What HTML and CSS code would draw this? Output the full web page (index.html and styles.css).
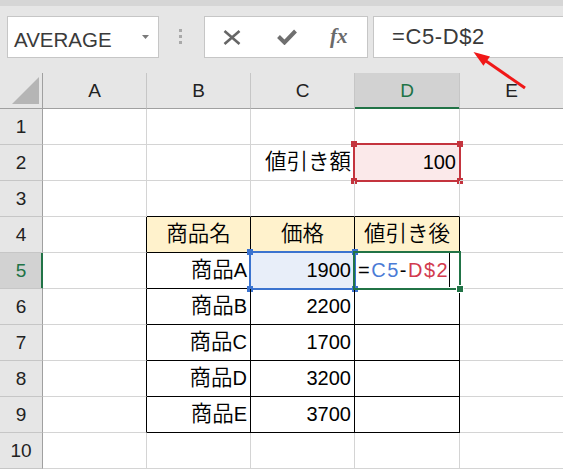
FILE: index.html
```html
<!DOCTYPE html>
<html lang="ja">
<head>
<meta charset="utf-8">
<title>Excel</title>
<link rel="stylesheet" href="styles.css">
</head>
<body>
<div class="app">
  <div class="toolbar">
    <div class="namebox">
      <span class="name">AVERAGE</span>
      <svg class="caret" width="7" height="4" viewBox="0 0 7 4"><path d="M0 0H7L3.5 4Z" fill="#7a7a7a"/></svg>
    </div>
    <div class="grip"><i></i><i></i><i></i></div>
    <div class="fbtns">
      <svg class="ico-x" width="18" height="15" viewBox="0 0 18 15"><path d="M1.5 1L16.5 14M16.5 1L1.5 14" stroke="#666" stroke-width="2.6" fill="none"/></svg>
      <svg class="ico-check" width="20" height="16" viewBox="0 0 20 16"><path d="M1.5 7.5L7.5 13.5L18.5 2" stroke="#6f6f6f" stroke-width="4" fill="none"/></svg>
      <span class="fx">fx</span>
    </div>
    <div class="formula">=C5-D$2</div>
  </div>

  <div class="sheet">
    <div class="corner"><svg width="42" height="35" viewBox="0 0 42 35"><path d="M12 31H39V4Z" fill="#b5b5b5"/></svg></div>
    <div class="ch">A</div>
    <div class="ch">B</div>
    <div class="ch">C</div>
    <div class="ch sel">D</div>
    <div class="ch">E</div>

    <div class="rh">1</div>
    <div class="c"></div><div class="c"></div><div class="c"></div><div class="c"></div><div class="c"></div>

    <div class="rh">2</div>
    <div class="c"></div>
    <div class="c"></div>
    <div class="c r"><span class="jp">値引き額</span></div>
    <div class="c r ref-red">100<div class="box red"><i class="h tl"></i><i class="h tr"></i><i class="h bl"></i><i class="h br"></i></div></div>
    <div class="c"></div>

    <div class="rh">3</div>
    <div class="c"></div>
    <div class="c tt"></div><div class="c tt"></div><div class="c tt"></div>
    <div class="c"></div>

    <div class="rh">4</div>
    <div class="c tl"></div>
    <div class="c t hd ctr"><span class="jp">商品名</span></div>
    <div class="c t hd ctr"><span class="jp">価格</span></div>
    <div class="c t hd ctr"><span class="jp">値引き後</span></div>
    <div class="c"></div>

    <div class="rh sel">5</div>
    <div class="c tl"></div>
    <div class="c t r"><span class="jp">商品</span>A</div>
    <div class="c t r ref-blue">1900<div class="box blue"><i class="h tl"></i><i class="h tr"></i><i class="h bl"></i><i class="h br"></i></div></div>
    <div class="c t edit"><span class="f-eq">=</span><span class="f-c">C5</span><span class="f-eq">-</span><span class="f-d">D$2</span><span class="cursor"></span><div class="box green"><i class="fill"></i></div></div>
    <div class="c"></div>

    <div class="rh">6</div>
    <div class="c tl"></div>
    <div class="c t r"><span class="jp">商品</span>B</div>
    <div class="c t r">2200</div>
    <div class="c t"></div>
    <div class="c"></div>

    <div class="rh">7</div>
    <div class="c tl"></div>
    <div class="c t r"><span class="jp">商品</span>C</div>
    <div class="c t r">1700</div>
    <div class="c t"></div>
    <div class="c"></div>

    <div class="rh">8</div>
    <div class="c tl"></div>
    <div class="c t r"><span class="jp">商品</span>D</div>
    <div class="c t r">3200</div>
    <div class="c t"></div>
    <div class="c"></div>

    <div class="rh">9</div>
    <div class="c tl"></div>
    <div class="c t r"><span class="jp">商品</span>E</div>
    <div class="c t r">3700</div>
    <div class="c t"></div>
    <div class="c"></div>

    <div class="rh">10</div>
    <div class="c"></div><div class="c"></div><div class="c"></div><div class="c"></div><div class="c"></div>
  </div>

  <svg class="arrow" width="563" height="469" viewBox="0 0 563 469">
    <line x1="525" y1="88" x2="486" y2="61" stroke="#f01818" stroke-width="3"/>
    <path d="M473.5 52L490 56.4L483.4 65.8Z" fill="#f01818"/>
  </svg>
</div>
</body>
</html>
```

FILE: styles.css
```css
html, body {
  margin: 0;
  padding: 0;
  overflow: hidden;
}

body {
  width: 563px;
  height: 469px;
  background: #ffffff;
  font-family: "Liberation Sans", "Noto Sans CJK JP", sans-serif;
  color: #000;
}

.app {
  position: relative;
  width: 563px;
  height: 469px;
  overflow: hidden;
}

/* ---------- formula toolbar ---------- */
.toolbar {
  box-sizing: border-box;
  height: 73px;
  border-top: 6px solid #d6d6d6;
  padding-top: 10px;
  background: #e6e6e6;
  display: flex;
  align-items: flex-start;
}

.namebox {
  box-sizing: border-box;
  flex: none;
  margin-left: 7px;
  width: 152px;
  height: 42px;
  border: 1px solid #c6c6c6;
  background: #fff;
  display: flex;
  align-items: center;
  padding: 5px 0 0 6px;
}

.name {
  font-size: 20.5px;
  color: #3a3a3a;
}

.caret {
  margin-left: auto;
  margin-right: 9px;
  margin-top: -6px;
}

.grip {
  flex: none;
  margin-left: 20px;
  margin-top: 13px;
  display: flex;
  flex-direction: column;
  gap: 3px;
}

.grip i {
  display: block;
  width: 3px;
  height: 3px;
  background: #a9a9a9;
}

.fbtns {
  box-sizing: border-box;
  flex: none;
  margin-left: 22px;
  width: 164px;
  height: 42px;
  border: 1px solid #c6c6c6;
  background: #fff;
  display: flex;
  align-items: center;
}

.ico-x {
  margin-left: 18px;
}

.ico-check {
  margin-left: 36px;
}

.fx {
  margin-left: 33px;
  font-family: "Liberation Serif", serif;
  font-style: italic;
  font-weight: bold;
  font-size: 21px;
  color: #6a6a6a;
  margin-top: -2px;
}

.formula {
  box-sizing: border-box;
  flex: none;
  margin-left: 5px;
  width: 220px;
  height: 42px;
  border: 1px solid #c6c6c6;
  background: #fff;
  display: flex;
  align-items: center;
  padding-left: 18px;
  font-size: 22px;
  letter-spacing: 0.6px;
  color: #3a3a3a;
}

/* ---------- sheet grid ---------- */
.sheet {
  display: grid;
  grid-template-columns: 43px 104px 104px 104px 105px 104px;
  grid-auto-rows: 36px;
}

.sheet > div {
  box-sizing: border-box;
}

.corner {
  background: #e6e6e6;
  border-right: 1px solid #a0a0a0;
  border-bottom: 1px solid #a0a0a0;
}

.corner svg {
  display: block;
}

.ch {
  background: #e6e6e6;
  border-right: 1px solid #c6c6c6;
  border-bottom: 1px solid #a0a0a0;
  text-align: center;
  line-height: 35px;
  font-size: 19px;
  color: #222;
}

.ch.sel {
  background: #d2d2d2;
  color: #217346;
  border-bottom-color: #217346;
  box-shadow: inset 0 -1px 0 #217346;
}

.rh {
  background: #e6e6e6;
  border-right: 1px solid #a0a0a0;
  border-bottom: 1px solid #c6c6c6;
  text-align: center;
  line-height: 35px;
  font-size: 19px;
  color: #222;
}

.rh.sel {
  background: #d2d2d2;
  color: #217346;
  border-right-color: #217346;
  box-shadow: inset -1px 0 0 #217346;
}

.c {
  position: relative;
  border-right: 1px solid #d4d4d4;
  border-bottom: 1px solid #d4d4d4;
  padding: 0 3px;
  line-height: 35px;
  font-size: 20px;
  white-space: nowrap;
}

.r { text-align: right; }
.ctr { text-align: center; }

.jp {
  font-family: "Noto Sans CJK JP", sans-serif;
  font-size: 21.5px;
  font-weight: 350;
  line-height: 1;
}

/* table borders */
.tt { border-bottom-color: #000; }
.tl { border-right-color: #000; }
.t {
  border-right-color: #000;
  border-bottom-color: #000;
}
.hd { background: #fff2cc; }

/* reference highlights */
.ref-red { background: #fbe9ea; }
.ref-blue { background: #e8eef9; }

.box {
  position: absolute;
  top: -2px;
  left: -2px;
  right: -2px;
  bottom: -2px;
  border: 2px solid;
  pointer-events: none;
}

.box.red { border-color: #c4343e; }
.box.blue { border-color: #3b73cf; }
.box.green { border-color: #217346; z-index: 2; }

.box.red .h { background: #c4343e; }
.box.blue .h { background: #3b73cf; }

.h {
  position: absolute;
  width: 6px;
  height: 6px;
}
.h.tl { top: -4px; left: -4px; }
.h.tr { top: -4px; right: -4px; }
.h.bl { bottom: -4px; left: -4px; }
.h.br { bottom: -4px; right: -4px; }

.fill {
  position: absolute;
  right: -5px;
  bottom: -5px;
  width: 6px;
  height: 6px;
  background: #217346;
  border: 1px solid #fff;
}

/* edited cell */
.edit {
  letter-spacing: 1.5px;
}
.f-eq { color: #000; }
.f-c { color: #4a7bd6; }
.f-d { color: #d23a4e; }

.cursor {
  display: inline-block;
  width: 1px;
  height: 34px;
  background: #000;
  vertical-align: top;
  margin-left: 0;
}

/* annotation arrow */
.arrow {
  position: absolute;
  top: 0;
  left: 0;
  pointer-events: none;
  z-index: 5;
}
```
